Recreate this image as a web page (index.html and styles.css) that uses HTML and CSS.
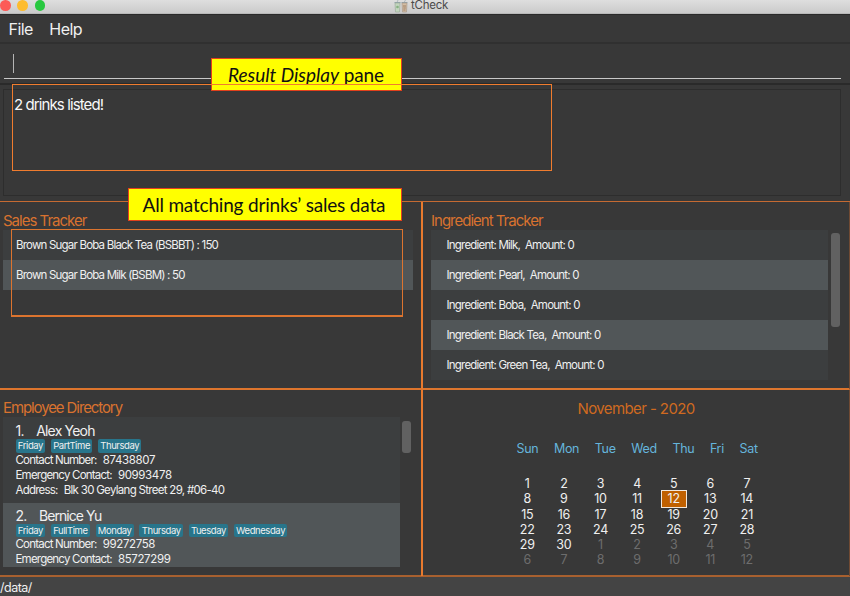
FILE: index.html
```html
<!DOCTYPE html>
<html lang="en">
<head>
<meta charset="utf-8">
<title>tCheck</title>
<link rel="stylesheet" href="styles.css">
</head>
<body>
<div class="window">
  <header class="titlebar">
    <div class="lights"><i class="close"></i><i class="min"></i><i class="max"></i></div>
    <div class="title">
      <svg width="14" height="13" viewBox="0 0 14 13">
        <path d="M3 2.5 4 0M10 2.5 11.5 0" stroke="#a9b4ba" stroke-width=".9"/>
        <path d="M.5 2.5h6M7.5 2.5h6" stroke="#8fa2ab" stroke-width="1"/>
        <path d="M1 3h5l-.5 9h-4z" fill="#c2d5be" stroke="#9eae9c" stroke-width=".7"/>
        <path d="M8 3h5l-.5 9h-4z" fill="#d3bda4" stroke="#a9998a" stroke-width=".7"/>
        <circle cx="3.5" cy="7" r="1.3" fill="#86b181"/>
        <path d="M9 6h3M9.3 8h2.5M9.3 10h2.2" stroke="#97785f" stroke-width=".9"/>
      </svg>
      <span>tCheck</span>
    </div>
  </header>
  <nav class="menu"><span>File</span><span>Help</span></nav>
  <div class="command"><div class="field"><i class="caret"></i></div></div>
  <section class="result"><div class="result-box">2 drinks listed!</div></section>
  <main class="grid">
    <section class="pane left">
      <h2>Sales Tracker</h2>
      <ul class="list sales">
        <li>Brown Sugar Boba Black Tea (BSBBT) : 150</li>
        <li>Brown Sugar Boba Milk (BSBM) : 50</li>
      </ul>
    </section>
    <section class="pane right">
      <h2>Ingredient Tracker</h2>
      <div class="scroll">
        <ul class="list ingredients">
          <li>Ingredient: Milk,  Amount: 0</li>
          <li>Ingredient: Pearl,  Amount: 0</li>
          <li>Ingredient: Boba,  Amount: 0</li>
          <li>Ingredient: Black Tea,  Amount: 0</li>
          <li>Ingredient: Green Tea,  Amount: 0</li>
        </ul>
        <i class="thumb tall"></i>
      </div>
    </section>
    <section class="pane left lower">
      <h2 class="directory">Employee Directory</h2>
      <div class="scroll">
        <div class="people">
          <article class="card">
            <h3><span>1.</span><span>Alex Yeoh</span></h3>
            <div class="tags"><b>Friday</b><b>PartTime</b><b>Thursday</b></div>
            <p><span>Contact Number:</span><span class="num">87438807</span></p>
            <p><span>Emergency Contact:</span><span class="num">90993478</span></p>
            <p><span>Address:</span><span class="addr">Blk 30 Geylang Street 29, #06-40</span></p>
          </article>
          <article class="card alt">
            <h3><span>2.</span><span class="tight">Bernice Yu</span></h3>
            <div class="tags"><b>Friday</b><b>FullTime</b><b>Monday</b><b>Thursday</b><b>Tuesday</b><b>Wednesday</b></div>
            <p><span>Contact Number:</span><span class="num">99272758</span></p>
            <p><span>Emergency Contact:</span><span class="num">85727299</span></p>
          </article>
        </div>
        <i class="thumb short"></i>
      </div>
    </section>
    <section class="pane right lower">
      <div class="calendar">
        <div class="month">November - 2020</div>
        <div class="weekdays"><span>Sun</span><span>Mon</span><span>Tue</span><span>Wed</span><span>Thu</span><span>Fri</span><span>Sat</span></div>
        <div class="days">
          <span>1</span><span>2</span><span>3</span><span>4</span><span>5</span><span>6</span><span>7</span>
          <span>8</span><span>9</span><span>10</span><span>11</span><span class="today">12</span><span>13</span><span>14</span>
          <span>15</span><span>16</span><span>17</span><span>18</span><span>19</span><span>20</span><span>21</span>
          <span>22</span><span>23</span><span>24</span><span>25</span><span>26</span><span>27</span><span>28</span>
          <span>29</span><span>30</span><span class="off">1</span><span class="off">2</span><span class="off">3</span><span class="off">4</span><span class="off">5</span>
          <span class="off">6</span><span class="off">7</span><span class="off">8</span><span class="off">9</span><span class="off">10</span><span class="off">11</span><span class="off">12</span>
        </div>
      </div>
    </section>
  </main>
  <footer class="status">/data/</footer>

  <div class="callout callout-result"><em>Result Display</em> pane</div>
  <div class="callout callout-sales">All matching drinks’ sales data</div>
  <div class="outline outline-result"></div>
  <div class="outline outline-sales"></div>
</div>
</body>
</html>
```
FILE: styles.css
```css
* { box-sizing: border-box; }
body { margin: 0; font-family: Inter, "Liberation Sans", sans-serif; color: #f0f0f0; background: #383838; }
h2, h3, p, ul { margin: 0; padding: 0; font-weight: 400; }
ul { list-style: none; }
i { display: block; }

.window { position: relative; width: 850px; height: 596px; overflow: hidden; display: flex; flex-direction: column; background: #383838; }

.titlebar { height: 14px; flex: none; display: flex; background: linear-gradient(#dedede, #cbcbcb); border-bottom: 1px solid #b9b9b9; }
.lights { display: flex; gap: 6.8px; width: 394px; height: 10px; }
.lights i { width: 10.5px; height: 10.5px; border-radius: 50%; }
.close { background: #fc5b57; }
.min { background: #fdbc2e; }
.max { background: #28c840; }
.title { display: flex; gap: 3px; color: #4b4b4b; font-size: 11.5px; line-height: 11px; letter-spacing: -0.25px; }

.menu { height: 30px; flex: none; display: flex; gap: 16.5px; padding-left: 8.5px; border-top: 1px solid #2a2a2a; border-bottom: 2px solid #303030; font-size: 16px; line-height: 28px; letter-spacing: -0.55px; }
.command { height: 41px; flex: none; padding: 9px 9px 0 4px; border-bottom: 2px solid #2a2a2a; }
.field { height: 26px; padding: 1px 0 0 9px; border-bottom: 1px solid #c8c8c8; }
.caret { width: 1px; height: 19px; background: #b4b4b4; }
.result { height: 116px; flex: none; padding: 4px 9px 5px 3px; }
.result-box { height: 107px; padding: 5px 10px; border: 1px solid #2d2d2d; color: #f8f8f8; font-size: 15px; line-height: 20px; letter-spacing: -0.9px; }

.grid { flex: none; height: 376px; display: grid; grid-template-columns: 423px 427px; grid-template-rows: 188px 186px; border-top: 1px solid #c56a32; border-bottom: 2px solid #a8602f; }
.pane { padding: 9px 0 0 3px; border-bottom: 2px solid #dd752d; overflow: hidden; }
.left { border-right: 2px solid #e87a2e; }
.right { padding-left: 8px; border-right: 1px solid #704a33; }
.lower { border-bottom: 0; padding-top: 8px; }
h2 { margin-bottom: -1.4px; color: #d9722f; font-size: 15px; line-height: 20px; letter-spacing: -1px; }
.directory { margin-bottom: 0; line-height: 19px; letter-spacing: -1.1px; }

.list { font-size: 11.5px; line-height: 30px; letter-spacing: -0.79px; }
.list li { height: 30.1px; background: #3c3e3f; padding-left: 13px; white-space: pre; }
.list li:nth-child(even) { background: #515658; }
.sales { width: 410px; letter-spacing: -0.8px; }
.ingredients { width: 397px; }
.list.ingredients li { padding-left: 15.5px; }
.scroll { display: flex; }
.thumb { width: 9px; border-radius: 3px; background: #616161; }
.tall { height: 94px; margin: 3px 0 0 3px; }
.short { height: 32px; margin: 4px 0 0 2px; }

.people { width: 397px; height: 150px; overflow: hidden; }
.card { height: 85.5px; padding: 6px 0 0 12.5px; background: #3c3e3f; }
.alt { background: #515658; padding-top: 5.4px; }
.card h3 { display: flex; gap: 12.5px; font-size: 14px; line-height: 15px; letter-spacing: -0.8px; }
.card h3 .tight { letter-spacing: -0.95px; }
.tags { display: flex; gap: 5.9px; margin-top: 1px; height: 13.5px; }
.tags b { padding: 0 2px 0 2.3px; border-radius: 2px; background: #28758b; font-weight: 400; font-size: 9.5px; line-height: 13.5px; letter-spacing: -0.42px; }
.card p { display: flex; gap: 6.2px; font-size: 11.5px; line-height: 15px; letter-spacing: -0.79px; }
.num { letter-spacing: -0.36px; }
.addr { letter-spacing: -0.7px; }

.calendar { width: 256.2px; margin: 0 0 0 78px; }
.month { padding-left: 68.5px; color: #cf6a20; font-size: 15px; line-height: 21px; letter-spacing: -0.6px; }
.weekdays { display: flex; justify-content: space-between; margin-top: 21px; padding: 0 7.5px 0 7.5px; color: #65b5dc; font-size: 12.5px; line-height: 17px; letter-spacing: -0.3px; }
.days { display: grid; grid-template-columns: repeat(7, 36.6px); grid-auto-rows: 15.25px; margin-top: 19px; font-size: 12.5px; line-height: 15.25px; letter-spacing: -0.2px; text-align: center; }
.off { color: #6d6d6d; }
.today { width: 26px; height: 18px; margin: -1.5px auto 0; border: 1px solid #f2e7dc; background: #c06000; line-height: 16px; }

.status { flex: 1; background: #444; font-size: 12.5px; line-height: 21px; letter-spacing: -0.5px; }

/* Annotations laid over the window */
.callout { position: absolute; height: 33px; border: 1px solid #e2401c; background: #ff0; color: #111; font: 19px/31px Lato, sans-serif; white-space: nowrap; letter-spacing: -0.19px; }
.callout-result { left: 211px; top: 58px; width: 191px; padding-left: 16px; }
.callout-result em { letter-spacing: 0; }
.callout-sales { left: 128px; top: 188px; width: 274px; padding-left: 13.5px; }
.outline { position: absolute; border: 1px solid #f07c2e; }
.outline-result { left: 12px; top: 84px; width: 540px; height: 87px; }
.outline-sales { left: 11px; top: 229px; width: 392px; height: 88px; border-bottom-width: 2px; border-color: #dc742f; }
```
